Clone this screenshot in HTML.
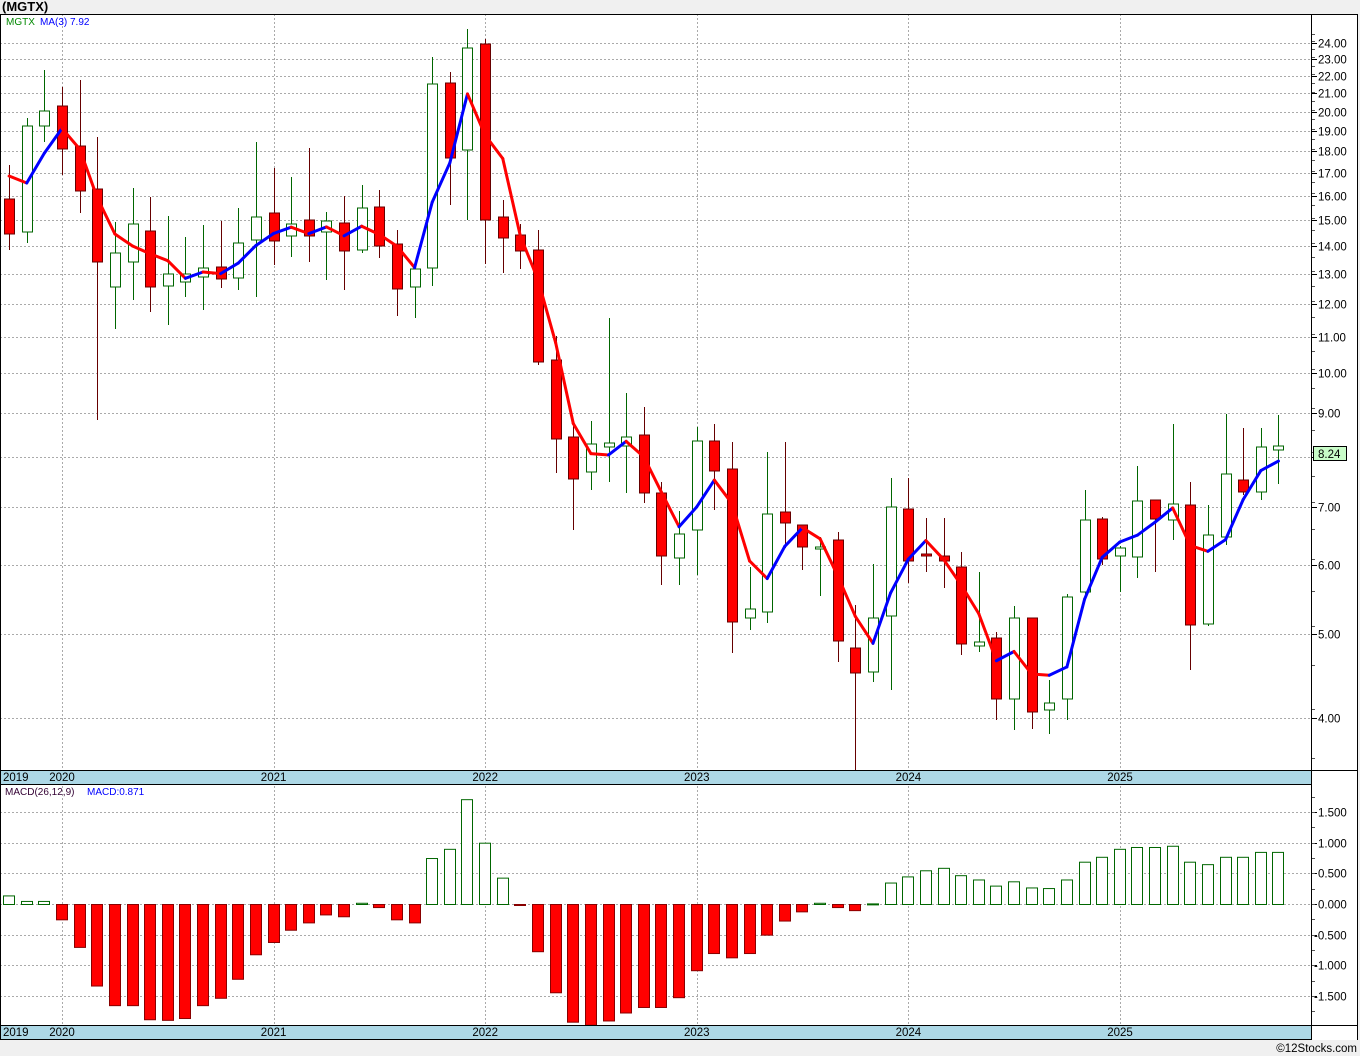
<!DOCTYPE html>
<html><head><meta charset="utf-8"><style>
html,body{margin:0;padding:0;background:#f0f0f0;}
svg{display:block;font-family:"Liberation Sans",sans-serif;}
</style></head><body>
<svg id="s" width="1360" height="1056" xmlns="http://www.w3.org/2000/svg"></svg>
<script>
var W=[];
function a(s){W.push(s);}
a('<rect x="0" y="0" width="1360" height="1056" fill="#f0f0f0"/>');
a('<text x="2" y="11" font-size="13" font-weight="bold" fill="#000">(MGTX)</text>');
a('<rect x="0" y="14" width="1357" height="1026" fill="#fff"/>');
function yp(p){return 718-376.7*Math.log(p/4);}
function cx(i){return 62+i*17.63;}
var prices=[24,23,22,21,20,19,18,17,16,15,14,13,12,11,10,9,8,7,6,5,4];
prices.forEach(function(p){var y=Math.round(yp(p))+.5;
a('<line x1="0" x2="1311" y1="'+y+'" y2="'+y+'" stroke="#aaa" stroke-dasharray="2,2"/>');
a('<line x1="1311" x2="1317" y1="'+y+'" y2="'+y+'" stroke="#000"/>');
if(p!=8)a('<text x="1318" y="'+(y+4)+'" font-size="11.5" fill="#000">'+p.toFixed(2)+'</text>');});
for(var p=3.6;p<25;p+=0.5){var y=Math.round(yp(p))+.5;if(y>16&&y<770)a('<line x1="1311" x2="1315" y1="'+y+'" y2="'+y+'" stroke="#555"/>');}
[1.5,1,0.5,0,-0.5,-1,-1.5].forEach(function(v){var y=Math.round(904-61.3*v)+.5;
a('<line x1="0" x2="1311" y1="'+y+'" y2="'+y+'" stroke="#aaa" stroke-dasharray="2,2"/>');
a('<line x1="1311" x2="1317" y1="'+y+'" y2="'+y+'" stroke="#000"/>');
a('<text x="'+(v<0?1314:1318)+'" y="'+(y+4)+'" font-size="11.5" fill="#000">'+v.toFixed(3)+'</text>');});
for(var v=-1.75;v<1.9;v+=0.25){var y=Math.round(904-61.3*v)+.5;a('<line x1="1311" x2="1315" y1="'+y+'" y2="'+y+'" stroke="#555"/>');}
var yrs=[2020,2021,2022,2023,2024,2025];
for(var k=0;k<6;k++){var x=Math.round(62+k*211.6)+.5;
a('<line x1="'+x+'" x2="'+x+'" y1="14" y2="1025" stroke="#aaa" stroke-dasharray="2,2"/>');}
var C=[[-3,'r',165,199,234,250],[-2,'u',118,126,232,243],[-1,'u',70,111,126,142],[0,'r',87,106,149,175],[1,'r',80,146,191,213],[2,'r',137,189,262,420],[3,'u',222,253,287,329],[4,'u',188,224,262,300],[5,'r',197,231,287,312],[6,'u',216,274,286,325],[7,'u',237,274,282,297],[8,'u',225,268,277,310],[9,'r',221,267,279,288],[10,'u',208,243,278,290],[11,'u',142,217,240,297],[12,'r',168,213,241,265],[13,'u',177,224,236,257],[14,'r',148,220,236,262],[15,'u',212,221,232,280],[16,'r',196,223,251,290],[17,'u',185,208,250,253],[18,'r',190,207,246,258],[19,'r',230,244,289,316],[20,'u',262,269,287,318],[21,'u',57,84,268,286],[22,'r',72,83,158,205],[23,'u',29,48,150,220],[24,'r',39,44,220,264],[25,'r',200,217,238,273],[26,'r',224,235,251,269],[27,'r',230,250,362,365],[28,'r',336,360,439,473],[29,'r',420,437,479,530],[30,'u',421,444,472,490],[31,'u',318,443,447,482],[32,'u',393,437,446,493],[33,'r',407,435,493,503],[34,'r',482,493,556,585],[35,'u',511,534,558,585],[36,'u',427,441,530,575],[37,'r',424,441,471,510],[38,'r',442,469,622,653],[39,'u',567,609,618,630],[40,'u',452,514,612,623],[41,'r',442,512,523,548],[42,'r',525,525,547,570],[43,'u',537,547,549,596],[44,'r',532,540,641,662],[45,'r',605,648,673,770],[46,'u',564,618,672,682],[47,'u',478,507,616,690],[48,'r',478,509,561,583],[49,'r',518,554,556,572],[50,'r',518,556,561,588],[51,'r',552,567,644,655],[52,'u',572,642,646,652],[53,'r',632,638,699,720],[54,'u',606,618,699,730],[55,'r',618,618,712,729],[56,'u',680,703,710,734],[57,'u',594,597,699,720],[58,'u',490,520,592,600],[59,'r',517,519,559,565],[60,'u',546,548,556,592],[61,'u',466,501,557,578],[62,'r',500,500,519,572],[63,'u',424,504,520,540],[64,'r',482,505,625,670],[65,'u',505,535,624,626],[66,'u',414,474,537,545],[67,'r',428,480,492,495],[68,'u',428,447,492,500],[69,'u',415,446,450,484]];
var closes=[];
C.forEach(function(c){var x=Math.round(cx(c[0]))+.5;var up=c[1]=='u';
a('<line x1="'+x+'" x2="'+x+'" y1="'+c[2]+'" y2="'+c[5]+'" stroke="'+(up?'#060':'#600')+'"/>');
var h=Math.max(c[4]-c[3],2);
a('<rect x="'+(x-5)+'" y="'+c[3]+'" width="10" height="'+h+'" fill="'+(up?'#fff':'#f00')+'" stroke="'+(up?'#060':'#600')+'"/>');
closes.push(Math.exp((718-(up?c[3]:c[4]))/376.7)*4);});
var pts=[];for(var i=0;i<closes.length;i++){var s=0,n=0;for(var j=Math.max(0,i-2);j<=i;j++){s+=closes[j];n++;}pts.push([cx(C[i][0]),yp(s/n)]);}
pts[0][1]=176;pts[1][1]=183;
for(var i=1;i<pts.length;i++){a('<line x1="'+pts[i-1][0]+'" y1="'+pts[i-1][1]+'" x2="'+pts[i][0]+'" y2="'+pts[i][1]+'" stroke="'+(pts[i][1]<pts[i-1][1]?'#00f':'#f00')+'" stroke-width="3" stroke-linecap="round"/>');}
a('<text x="6" y="25" font-size="10" fill="#080">MGTX</text><text x="40" y="25" font-size="10" fill="#00f">MA(3)  7.92</text>');
a('<rect x="1313.5" y="446.5" width="33" height="14" fill="#c8fcc8" stroke="#000"/><text x="1318" y="458" font-size="11.5">8.24</text>');
var M=[0.14,0.05,0.05,-0.25,-0.7,-1.33,-1.65,-1.65,-1.88,-1.89,-1.86,-1.65,-1.53,-1.22,-0.82,-0.62,-0.42,-0.3,-0.17,-0.2,0.02,-0.05,-0.25,-0.3,0.75,0.9,1.71,1.0,0.43,-0.01,-0.77,-1.44,-1.92,-1.97,-1.9,-1.77,-1.68,-1.68,-1.52,-1.08,-0.8,-0.87,-0.8,-0.5,-0.27,-0.12,0.02,-0.05,-0.1,0.01,0.35,0.45,0.55,0.59,0.47,0.4,0.3,0.37,0.27,0.26,0.4,0.69,0.77,0.9,0.93,0.93,0.95,0.69,0.65,0.77,0.77,0.85,0.85];
for(var i=0;i<M.length;i++){var idx=i-3;if(idx>69)break;var bx=Math.round(cx(idx))-5.5;var v=M[i];var b0=904.5,b1=904.5-61.3*v;
var bt=Math.min(b0,b1),bh=Math.max(Math.abs(b1-b0),1);
a('<rect x="'+bx+'" y="'+bt+'" width="11" height="'+bh+'" fill="'+(v<0?'#f00':'#fff')+'" stroke="'+(v<0?'#800':'#060')+'"/>');}
a('<text x="5" y="795" font-size="10" fill="#303">MACD(26,12,9)</text><text x="87" y="795" font-size="10" fill="#00f">MACD:0.871</text>');
function strip(y){a('<rect x="0" y="'+y+'" width="1311" height="14" fill="#add8e6"/>');
a('<line x1="0" x2="1357" y1="'+(y+.5)+'" y2="'+(y+.5)+'" stroke="#000"/><line x1="0" x2="1311" y1="'+(y+14.5)+'" y2="'+(y+14.5)+'" stroke="#000"/>');
a('<text x="3" y="'+(y+11)+'" font-size="11.5">2019</text>');
yrs.forEach(function(yr,k){a('<text x="'+(62+k*211.6)+'" y="'+(y+11)+'" font-size="11.5" text-anchor="middle">'+yr+'</text>');});}
strip(770);strip(1025);
a('<line x1="1311.5" x2="1311.5" y1="14" y2="1040" stroke="#000"/>');
a('<line x1="0.5" x2="0.5" y1="14" y2="1040" stroke="#000"/><line x1="1357.5" x2="1357.5" y1="14" y2="1040" stroke="#000"/><line x1="0" x2="1358" y1="14.5" y2="14.5" stroke="#000"/>');
a('<rect x="0" y="1040" width="1360" height="16" fill="#f0f0f0"/>');
a('<text x="1357" y="1052" font-size="11.5" text-anchor="end">©12Stocks.com</text>');
document.getElementById('s').innerHTML=W.join('');
</script>
</body></html>
